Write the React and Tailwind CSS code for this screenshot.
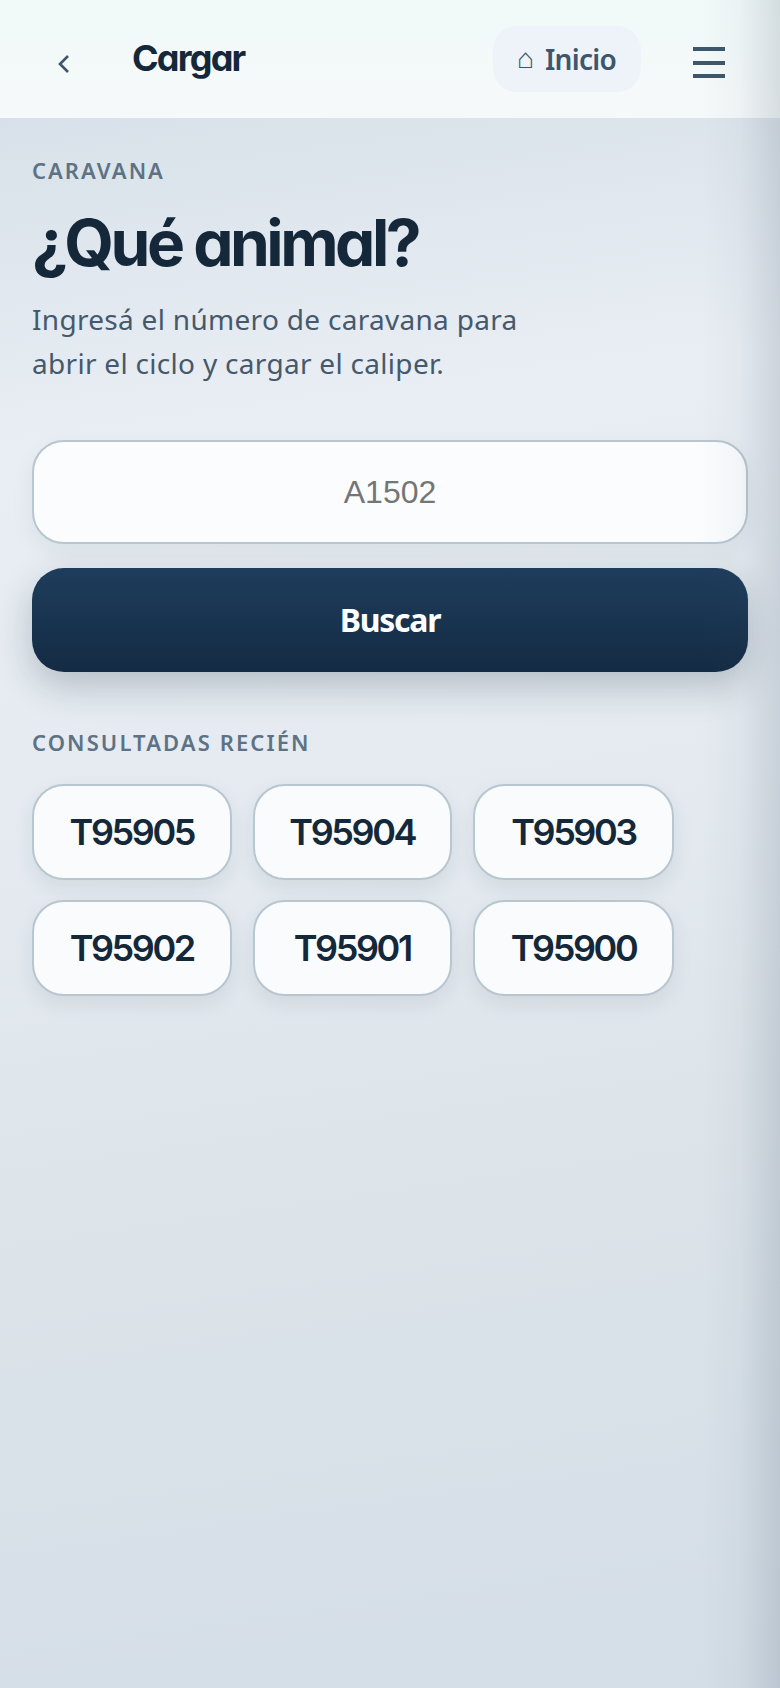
import React from 'react';

const display = "font-['Inter','Lato',sans-serif] [font-feature-settings:'cv11','ss03']";
const body = "font-['Noto_Sans','Open_Sans',sans-serif]";

const codes = ['T95905', 'T95904', 'T95903', 'T95902', 'T95901', 'T95900'];

export default function App() {
  return (
    <div className={`relative flex flex-col w-[780px] h-[1688px] overflow-hidden ${body}`}>
      <header className="flex items-center h-[118px] shrink-0 bg-[linear-gradient(180deg,#f1f9f9_0%,#f6f9fa_100%)]">
        <div className="w-[132px] pl-[55px] pt-[10px] text-[#3d566b]">
          <svg width="18" height="24" viewBox="0 0 18 24" fill="none" stroke="currentColor" strokeWidth="2.6">
            <path d="M13 4 L5 12 L13 20" />
          </svg>
        </div>
        <div className={`${display} text-[36px] font-bold tracking-[-1.8px] text-[#14283a] -mt-[2px]`}>Cargar</div>
        <div className="ml-auto mr-[52px] flex items-center w-[148px] h-[66px] rounded-[24px] bg-[#edf3f9] pl-[24px] text-[#3d566b]">
          <span className="text-[28px] font-['Liberation_Sans',sans-serif] leading-none mr-[11px] font-light">⌂</span>
          <span className="text-[28px] font-semibold tracking-[-0.7px]">Inicio</span>
        </div>
        <div className="mr-[55px] w-[32px] flex flex-col gap-[9.5px] mt-[7px]">
          <div className="h-[4px] bg-[#3d566b]" />
          <div className="h-[4px] bg-[#3d566b]" />
          <div className="h-[4px] bg-[#3d566b]" />
        </div>
      </header>

      <main className="flex-1 px-[32px] bg-[linear-gradient(172deg,#d8e1e9_0%,#e9eef4_20%,#e4eaf0_45%,#dde4ea_65%,#d4dee7_100%)]">
        <div className="mt-[37px] text-[22px] leading-[30px] font-semibold tracking-[2px] text-[#5d7284]">CARAVANA</div>
        <h1 className={`${display} mt-[18px] text-[64px] leading-[80px] font-bold tracking-[-3.5px] text-[#14283a]`}>¿Qué animal?</h1>
        <p className="mt-[14px] text-[28px] leading-[44px] tracking-[0.3px] text-[#46596c]">
          Ingresá el número de caravana para<br />abrir el ciclo y cargar el caliper.
        </p>

        <input
          placeholder="A1502"
          className="mt-[55px] block w-full h-[104px] rounded-[32px] border-2 border-[#b8c6cf] bg-[#fafcfe] text-center text-[32px] font-['Liberation_Sans',sans-serif] outline-none placeholder:text-[#757575] shadow-[0_10px_24px_rgba(20,40,58,0.06)]"
        />
        <button className="mt-[24px] block w-full h-[104px] rounded-[32px] bg-[linear-gradient(180deg,#1e3d5c_0%,#142b44_100%)] text-white text-[32px] font-bold tracking-[-1.3px] shadow-[0_14px_36px_rgba(20,40,58,0.24)]">
          Buscar
        </button>

        <div className="mt-[55px] text-[22px] leading-[30px] font-semibold tracking-[2.1px] text-[#5d7284]">CONSULTADAS RECIÉN</div>

        <div className="mt-[27px] grid grid-cols-[199.5px_199.5px_201px] gap-x-[21px] gap-y-[19.5px]">
          {codes.map((c) => (
            <div
              key={c}
              className={`${display} flex items-center justify-center h-[96px] rounded-[32px] border-2 border-[#b8c6cf] bg-[#f9fbfd] text-[36px] font-semibold tracking-[-2.4px] text-[#14283a] shadow-[0_8px_20px_rgba(20,40,58,0.08)]`}
            >
              {c}
            </div>
          ))}
        </div>
      </main>

      <div className="absolute inset-y-0 right-0 w-[80px] pointer-events-none bg-[linear-gradient(90deg,rgba(60,80,100,0)_0%,rgba(60,80,100,0.04)_50%,rgba(60,80,100,0.17)_100%)]" />
    </div>
  );
}
